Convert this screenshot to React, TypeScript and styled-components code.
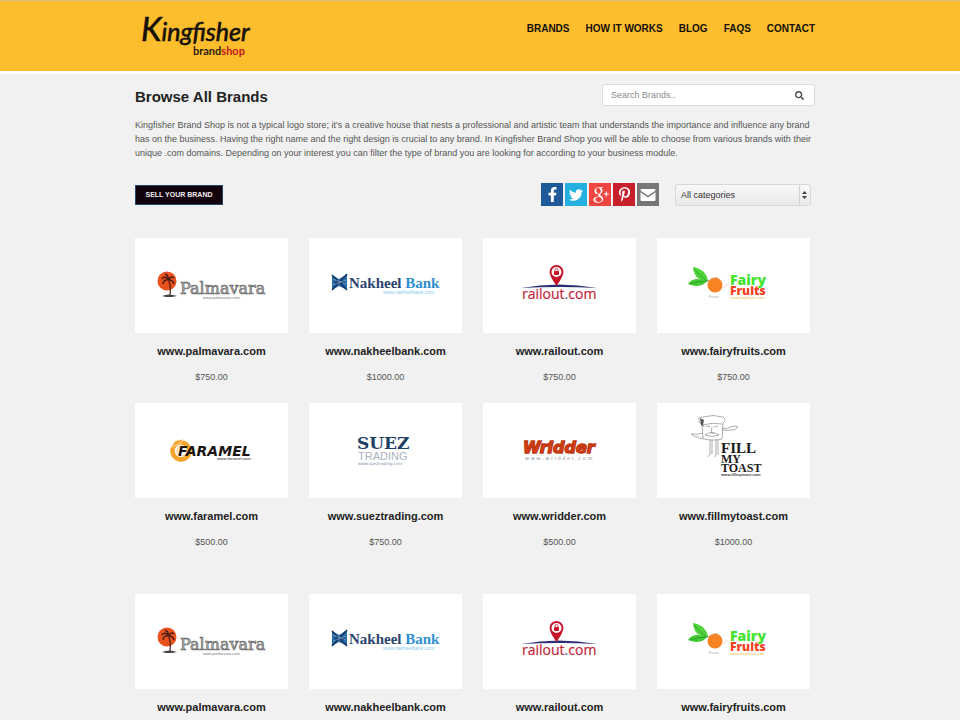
import React from "react";
import styled, { createGlobalStyle } from "styled-components";
import { FaFacebookF, FaTwitter, FaPinterestP, FaSearch } from "react-icons/fa";
import { TiSocialGooglePlus } from "react-icons/ti";

const GlobalStyle = createGlobalStyle`
  *, *::before, *::after { box-sizing: border-box; }
  body {
    margin: 0;
    background: #f1f1f1;
    color: #222;
    font-family: "Liberation Sans", Arial, sans-serif;
    font-size: 9px;
    line-height: 14px;
  }
  a { color: inherit; text-decoration: none; }
  h1, h2, p { margin: 0; }
`;

const Header = styled.header`
  background: #fdbe2d;
  border-top: 1px solid #d8bb80;
  border-bottom: 3px solid #fff;
  padding-right: 10px;
`;

const Container = styled.div`
  width: 100%;
  max-width: 680px;
  margin: 0 auto;
`;

const HeaderBar = styled(Container)`
  display: flex;
  justify-content: space-between;
  align-items: flex-start;
  height: 70px;
`;

const LogoLink = styled.a`
  display: block;
  padding: 10px 0 0 5px;
  svg { display: block; }
`;

const Nav = styled.nav`
  display: flex;
  gap: 16px;
  padding-top: 21px;
`;

const NavLink = styled.a`
  color: #15100a;
  font-size: 10px;
  font-weight: 700;
`;

const Main = styled.main`
  padding: 10px 10px 4px 0;
`;

const TitleRow = styled.div`
  display: flex;
  justify-content: space-between;
  align-items: center;
`;

const Title = styled.h1`
  font-size: 15px;
  line-height: 18px;
  padding-top: 4px;
`;

const SearchForm = styled.form`
  display: flex;
  align-items: center;
  width: 213px;
  height: 22px;
  padding: 0 10px 0 8px;
  background: #fff;
  border: 1px solid #dcdcdc;
  border-radius: 2px;
`;

const SearchInput = styled.input`
  flex: 1;
  min-width: 0;
  padding: 0;
  border: 0;
  outline: 0;
  background: none;
  color: #555;
  font: 9px "Liberation Sans", Arial, sans-serif;
  &::placeholder { color: #8b8b8b; opacity: 1; }
`;

const SearchButton = styled.button`
  display: flex;
  padding: 0;
  border: 0;
  background: none;
  color: #4a4a4a;
  font-size: 9px;
`;

const Intro = styled.p`
  margin-top: 12px;
  color: #555;
`;

const Toolbar = styled.div`
  display: flex;
  align-items: center;
  margin-top: 23px;
  padding-right: 4px;
`;

const SellButton = styled.button`
  height: 20px;
  width: 88px;
  margin-right: auto;
  padding: 0;
  border: 1px solid #23486b;
  background: #12030c;
  color: #f2eef0;
  font: 700 7px "Liberation Sans", Arial, sans-serif;
`;

const ShareList = styled.div`
  display: flex;
  gap: 2px;
  margin-right: 16px;
`;

const ShareLink = styled.a<{ $color: string; $size: number }>`
  display: flex;
  align-items: center;
  justify-content: center;
  width: 22px;
  height: 23px;
  background: ${(p) => p.$color};
  color: #fff;
  font-size: ${(p) => p.$size}px;
  svg { flex: none; }
`;

const SelectBox = styled.div`
  position: relative;
  width: 136px;
  height: 22px;
`;

const Select = styled.select`
  appearance: none;
  width: 100%;
  height: 100%;
  padding: 0 14px 0 5px;
  border: 1px solid #d8d8d8;
  border-radius: 3px;
  background: linear-gradient(#f8f8f8, #eaeaea);
  color: #333;
  font: 9px "Liberation Sans", Arial, sans-serif;
`;

const SelectMark = styled.svg`
  position: absolute;
  top: 1px;
  right: 1px;
  pointer-events: none;
`;

const BrandGrid = styled.section`
  display: grid;
  grid-template-columns: repeat(4, 1fr);
  gap: 19px 21px;
  margin-top: 32px;
  padding-right: 5px;
  & + & { margin-top: 45px; }
`;

const Card = styled.a`
  display: flex;
  flex-direction: column;
  align-items: center;
`;

const Plate = styled.div`
  width: 100%;
  background: #fff;
  svg { display: block; width: 100%; height: 95px; }
`;

const Domain = styled.h2`
  margin-top: 11px;
  font-size: 11px;
  line-height: 14px;
`;

const Price = styled.p`
  margin-top: 12px;
  color: #555;
`;

const SANS = "'Liberation Sans', Arial, sans-serif";
const SERIF = "'Liberation Serif', Times, serif";
const DJSANS = "'DejaVu Sans', sans-serif";
const DJSERIF = "'DejaVu Serif', serif";

const MailIcon = () => (
  <svg width="16" height="12" viewBox="0 0 16 12" aria-hidden="true">
    <rect x="0.500" y="0" width="15" height="12" rx="1" fill="#fff" />
    <path d="M0 2L8 7.500L16 2" fill="none" stroke="#777" strokeWidth="1.500" />
  </svg>
);

const KingfisherLogo = () => (
  <svg width="116" height="50" viewBox="0 0 116 50" role="img" aria-label="Kingfisher brandshop">
    <text x="1" y="30" fontFamily="Lato, sans-serif" fontStyle="italic" fontSize="25" fill="#15100a" stroke="#15100a" strokeWidth="0.6">
      <tspan fontSize="33">K</tspan>ingfisher
    </text>
    <text x="53" y="44" fontFamily="Lato, sans-serif" fontWeight="700" fontSize="11" fill="#2b1c0c">
      brand<tspan fill="#c4161c">shop</tspan>
    </text>
  </svg>
);

const Palmavara = () => (
  <>
    <circle cx="32" cy="43" r="9.500" fill="#e8521f" />
    <path d="M34 43Q36 49 35 57" stroke="#4a1c10" strokeWidth="1.2" fill="none" />
    <path d="M34 42Q30 37 27 41M34 42Q29 41 28 46M34 42Q33 37 30 36M34 42Q36 37 39 40M34 42Q38 42 39 46" stroke="#4a1c10" strokeWidth="1.400" fill="none" />
    <path d="M27 58Q34 55 42 58L37 59H31Z" fill="#444" />
    <text x="45" y="56" fontFamily={DJSERIF} fontSize="16" fill="#b5b5b5" stroke="#5c5c5c" strokeWidth="0.6">Palmavara</text>
    <text x="68" y="61" fontFamily={SANS} fontSize="4" fill="#777">www.palmavara.com</text>
  </>
);

const NakheelBank = () => (
  <>
    <path d="M23 37L30 41L38 36V52L30 48L23 52Z" fill="#2c6ca6" />
    <path d="M23 37L38 52M38 36L23 52" stroke="#123663" strokeWidth="1.5" />
    <path d="M25 44.500Q30 38 36 44.500Q30 51 25 44.500Z" fill="#163f73" />
    <path d="M24 41L37 46M24 47L37 42M30 40V49" stroke="#9cc8e8" strokeWidth="0.5" />
    <text x="40" y="50" fontFamily={SERIF} fontWeight="700" fontSize="15" fill="#2c4470">
      Nakheel <tspan fill="#2f8fd0">Bank</tspan>
    </text>
    <text x="74" y="56" fontFamily={SANS} fontSize="5" fill="#8ccbed">www.nakheelbank.com</text>
  </>
);

const Railout = () => (
  <>
    <path d="M38 50Q76 43 114 50Q76 48 38 50Z" fill="#2c2f73" />
    <path fillRule="evenodd" d="M73.500 27a7 7 0 0 1 7 7q0 4-7 14q-7-10-7-14a7 7 0 0 1 7-7zm0 2a5 5 0 1 0 0 10a5 5 0 1 0 0-10z" fill="#c4152b" />
    <rect x="71" y="33" width="5" height="4" rx="1" fill="#c4152b" />
    <path d="M72 33V32a1.500 1.500 0 0 1 3 0V33" stroke="#c4152b" fill="none" strokeWidth="0.8" />
    <text x="39" y="61" fontFamily="'Open Sans', sans-serif" fontSize="14" fill="#c4253a" stroke="#c4253a" strokeWidth="0.2">
      railout<tspan fill="#2b7fc0">.</tspan>com
    </text>
  </>
);

const FairyFruits = () => (
  <>
    <path d="M36 29Q49 31 51 43Q37 43 36 29Z" fill="#4fd33a" />
    <path d="M31 46Q36 38 50 43Q44 51 31 46Z" fill="#43c934" />
    <path d="M37 31Q43 38 50 43M33 46Q41 43 50 43" stroke="#238b24" strokeWidth="0.6" fill="none" />
    <path d="M50 43L55 43" stroke="#555" strokeWidth="0.7" />
    <circle cx="58" cy="47" r="7.500" fill="#f78322" />
    <path d="M54 41L60 39L62 42M66 50L71 46" stroke="#c9b59b" strokeWidth="0.6" fill="none" />
    <text x="52" y="60" fontFamily={SANS} fontSize="4" fill="#aaa">Fruits</text>
    <text x="73" y="47" fontFamily="'Open Sans', sans-serif" fontWeight="800" fontSize="14" fill="#43e32e">Fairy</text>
    <text x="73" y="57" fontFamily="'Open Sans', sans-serif" fontWeight="800" fontSize="12" fill="#f5421e">Fruits</text>
    <text x="73" y="61" fontFamily={SANS} fontSize="4" fill="#f4bb4a">www.fairyfruits.com</text>
  </>
);

const Faramel = () => (
  <>
    <circle cx="46" cy="48" r="8.500" fill="none" stroke="#f6a32b" strokeWidth="4.500" />
    <path d="M36 44L40 38L48 36L46 40ZM55 41L57 46" fill="#f6a32b" stroke="#fff" strokeWidth="0.6" />
    <circle cx="47" cy="48" r="5" fill="none" stroke="#f9bd64" strokeWidth="1" />
    <text x="43" y="53" fontFamily={DJSANS} fontWeight="700" fontStyle="italic" fontSize="14" fill="#191512">FARAMEL</text>
    <text x="82" y="57" fontFamily={SANS} fontWeight="700" fontSize="4" fill="#666">www.faramel.com</text>
  </>
);

const SuezTrading = () => (
  <>
    <text x="48" y="46" fontFamily={DJSERIF} fontWeight="700" fontSize="17" fill="#1f3f66">SUEZ</text>
    <text x="49" y="57" fontFamily={SANS} fontSize="11" fill="#a9b3bf">TRADING</text>
    <text x="49" y="62" fontFamily={DJSANS} fontSize="4" fill="#7793b0">www.sueztrading.com</text>
  </>
);

const Wridder = () => (
  <>
    <text x="40" y="50" fontFamily={DJSANS} fontWeight="700" fontStyle="italic" fontSize="16" fill="#d8401a" stroke="#c0380f" strokeWidth="1.400">Wridder</text>
    <text x="42" y="57" fontFamily={DJSANS} fontSize="5" fill="#7b8c97">w w w . w r i d d e r . c o m</text>
  </>
);

const FillMyToast = () => (
  <>
    <g fill="none" stroke="#8b8b8b" strokeWidth="0.7">
      <path d="M42 17Q40 14 46 14Q56 11 66 14Q70 17 66 20L65 36Q58 38 46 36L45 21Q41 20 42 17Z" />
      <path d="M46 22Q55 19 65 21M49 24q2-2 4 0M57 24q2-2 4 0M55 24l-1 6h3M48 32Q55 27 62 32Q55 35 48 32Z" />
      <path d="M65 25Q70 27 73 24Q78 22 81 24Q78 28 73 27Q70 28 65 27M46 30Q40 32 34 31Q38 35 42 34Q44 38 46 34" />
      <path d="M53 37V51L51 54M55 37V51M59 37V51L58 54M61 37V52" />
    </g>
    <path d="M43 15L47 17L46 22L48 24L44 22Z" fill="#555" />
    <g fontFamily={SERIF} fontWeight="700" fill="#1a1a1a">
      <text x="64" y="50" fontSize="15">FILL</text>
      <text x="64" y="60" fontSize="12">MY</text>
      <text x="64" y="69" fontSize="12">TOAST</text>
    </g>
    <text x="64" y="73" fontFamily={SANS} fontWeight="700" fontSize="4" fill="#444">www.fillmytoast.com</text>
  </>
);

type Brand = { domain: string; price: string; Art: () => React.ReactElement };

const popular: Brand[] = [
  { domain: "www.palmavara.com", price: "$750.00", Art: Palmavara },
  { domain: "www.nakheelbank.com", price: "$1000.00", Art: NakheelBank },
  { domain: "www.railout.com", price: "$750.00", Art: Railout },
  { domain: "www.fairyfruits.com", price: "$750.00", Art: FairyFruits },
];

const recent: Brand[] = [
  { domain: "www.faramel.com", price: "$500.00", Art: Faramel },
  { domain: "www.sueztrading.com", price: "$750.00", Art: SuezTrading },
  { domain: "www.wridder.com", price: "$500.00", Art: Wridder },
  { domain: "www.fillmytoast.com", price: "$1000.00", Art: FillMyToast },
];

const BrandCards = ({ brands, priced = false }: { brands: Brand[]; priced?: boolean }) => (
  <BrandGrid>
    {brands.map(({ domain, price, Art }) => (
      <Card href="#" key={domain}>
        <Plate>
          <svg viewBox="0 0 153 95" aria-hidden="true"><Art /></svg>
        </Plate>
        <Domain>{domain}</Domain>
        {priced && <Price>{price}</Price>}
      </Card>
    ))}
  </BrandGrid>
);

const share = [
  { label: "Facebook", color: "#1f5a99", size: 15, Icon: FaFacebookF },
  { label: "Twitter", color: "#25b1e0", size: 14, Icon: FaTwitter },
  { label: "Google Plus", color: "#ee4540", size: 25, Icon: TiSocialGooglePlus },
  { label: "Pinterest", color: "#c81f2d", size: 15, Icon: FaPinterestP },
  { label: "Email", color: "#777", size: 16, Icon: MailIcon },
];

const navItems = ["BRANDS", "HOW IT WORKS", "BLOG", "FAQS", "CONTACT"];

export default function App() {
  return (
    <>
      <GlobalStyle />
      <Header>
        <HeaderBar>
          <LogoLink href="#"><KingfisherLogo /></LogoLink>
          <Nav>
            {navItems.map((item) => <NavLink href="#" key={item}>{item}</NavLink>)}
          </Nav>
        </HeaderBar>
      </Header>
      <Main>
        <Container>
          <TitleRow>
            <Title>Browse All Brands</Title>
            <SearchForm onSubmit={(e) => e.preventDefault()}>
              <SearchInput type="text" placeholder="Search Brands.." aria-label="Search brands" />
              <SearchButton type="submit" aria-label="Search"><FaSearch /></SearchButton>
            </SearchForm>
          </TitleRow>
          <Intro>
            Kingfisher Brand Shop is not a typical logo store; it's a creative house that nests a professional and
            artistic team that understands the importance and influence any brand has on the business. Having the
            right name and the right design is crucial to any brand. In Kingfisher Brand Shop you will be able to
            choose from various brands with their unique .com domains. Depending on your interest you can filter the
            type of brand you are looking for according to your business module.
          </Intro>
          <Toolbar>
            <SellButton type="button">SELL YOUR BRAND</SellButton>
            <ShareList>
              {share.map(({ label, color, size, Icon }) => (
                <ShareLink href="#" key={label} $color={color} $size={size} aria-label={label}><Icon /></ShareLink>
              ))}
            </ShareList>
            <SelectBox>
              <Select aria-label="Category"><option>All categories</option></Select>
              <SelectMark width="11" height="20" viewBox="0 0 11 20" aria-hidden="true">
                <path d="M0.500 0V20" stroke="#cfcfcf" />
                <path d="M5.500 6L8 9H3ZM5.500 14L8 11H3Z" fill="#444" />
              </SelectMark>
            </SelectBox>
          </Toolbar>
          <BrandCards brands={[...popular, ...recent]} priced />
          <BrandCards brands={popular} />
        </Container>
      </Main>
    </>
  );
}
